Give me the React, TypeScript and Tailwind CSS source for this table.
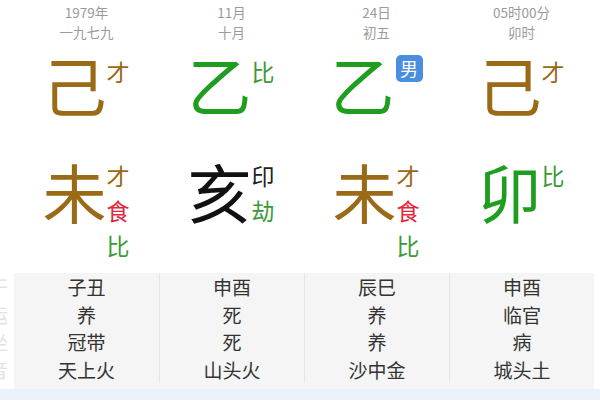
import React from 'react';

const BROWN = 'text-[#9a6a16]';
const GREEN = 'text-[#1f9d1f]';

type Small = { t: string; c: string };

const columns = [
  {
    top: ['1979年', '一九七九'],
    stem: { t: '己', c: BROWN },
    stemSup: { t: '才', c: 'text-[#9a6a16]' },
    branch: { t: '未', c: BROWN },
    hidden: [
      { t: '才', c: 'text-[#9a6a16]' },
      { t: '食', c: 'text-[#e3263c]' },
      { t: '比', c: 'text-[#3a9a3a]' },
    ],
    table: ['子丑', '养', '冠带', '天上火'],
  },
  {
    top: ['11月', '十月'],
    stem: { t: '乙', c: GREEN },
    stemSup: { t: '比', c: 'text-[#3a9a3a]' },
    branch: { t: '亥', c: 'text-[#111]' },
    hidden: [
      { t: '印', c: 'text-[#222]' },
      { t: '劫', c: 'text-[#3a9a3a]' },
    ],
    table: ['申酉', '死', '死', '山头火'],
  },
  {
    top: ['24日', '初五'],
    stem: { t: '乙', c: GREEN },
    stemSup: null,
    branch: { t: '未', c: BROWN },
    hidden: [
      { t: '才', c: 'text-[#9a6a16]' },
      { t: '食', c: 'text-[#e3263c]' },
      { t: '比', c: 'text-[#3a9a3a]' },
    ],
    table: ['辰巳', '养', '养', '沙中金'],
  },
  {
    top: ['05时00分', '卯时'],
    stem: { t: '己', c: BROWN },
    stemSup: { t: '才', c: 'text-[#9a6a16]' },
    branch: { t: '卯', c: GREEN },
    hidden: [{ t: '比', c: 'text-[#3a9a3a]' }],
    table: ['申酉', '临官', '病', '城头土'],
  },
];

const labels = ['藏干', '星运', '自坐', '纳音'];

function SmallChar({ s, lh }: { s: Small; lh: string }) {
  return <div className={`text-[23px] ${lh} ${s.c}`}>{s.t}</div>;
}

export default function App() {
  return (
    <div
      className="w-[600px] h-[400px] bg-white overflow-hidden flex flex-col"
      style={{ fontFamily: '"Noto Sans CJK SC", "Noto Sans", sans-serif' }}
    >
      <div className="flex pt-[2px]">
        <div className="w-[14px]" />
        {columns.map((col, i) => (
          <div key={i} className="w-[145px] flex flex-col items-center">
            {/* header */}
            <div className="text-[13.5px] leading-[20px] text-[#9a9a9a]">{col.top[0]}</div>
            <div className="text-[13.5px] leading-[20px] text-[#9a9a9a]">{col.top[1]}</div>

            {/* stem */}
            <div className="flex items-start mt-[9px] h-[107px]">
              <div className={`text-[64px] leading-[64px] ${col.stem.c}`}>{col.stem.t}</div>
              {col.stemSup ? (
                <div className="mt-[7px] w-[24px]">
                  <SmallChar s={col.stemSup} lh="leading-[26px]" />
                </div>
              ) : (
                <div className="mt-[4px] ml-[1px] w-[27px] h-[27px] rounded-[5px] bg-[#4a8ee0] text-white text-[18px] leading-[27px] text-center">
                  男
                </div>
              )}
            </div>

            {/* branch */}
            <div className="flex items-start h-[112px]">
              <div className={`text-[64px] leading-[64px] ${col.branch.c}`}>{col.branch.t}</div>
              <div className="w-[24px] flex flex-col">
                {col.hidden.map((s, j) => (
                  <SmallChar key={j} s={s} lh="leading-[35px]" />
                ))}
              </div>
            </div>
          </div>
        ))}
      </div>

      <div className="flex mt-[3px]">
        <div className="w-[14px] flex flex-col text-[19px] leading-[27.5px] text-[#e2e2e2]">
          {labels.map((l) => (
            <div key={l} className="w-[8px] overflow-hidden flex justify-end whitespace-nowrap">
              {l}
            </div>
          ))}
        </div>
        <div className="flex bg-[#f5f5f5] pb-[6px]">
          {columns.map((col, i) => (
            <div
              key={i}
              className={`w-[145px] flex flex-col items-center text-[19px] leading-[27.5px] text-[#333] ${
                i > 0 ? 'border-l border-[#e6e6e6]' : ''
              }`}
            >
              {col.table.map((t, j) => (
                <div key={j}>{t}</div>
              ))}
            </div>
          ))}
        </div>
      </div>

      <div className="flex-1 bg-[#ebf2fb]" />
    </div>
  );
}
